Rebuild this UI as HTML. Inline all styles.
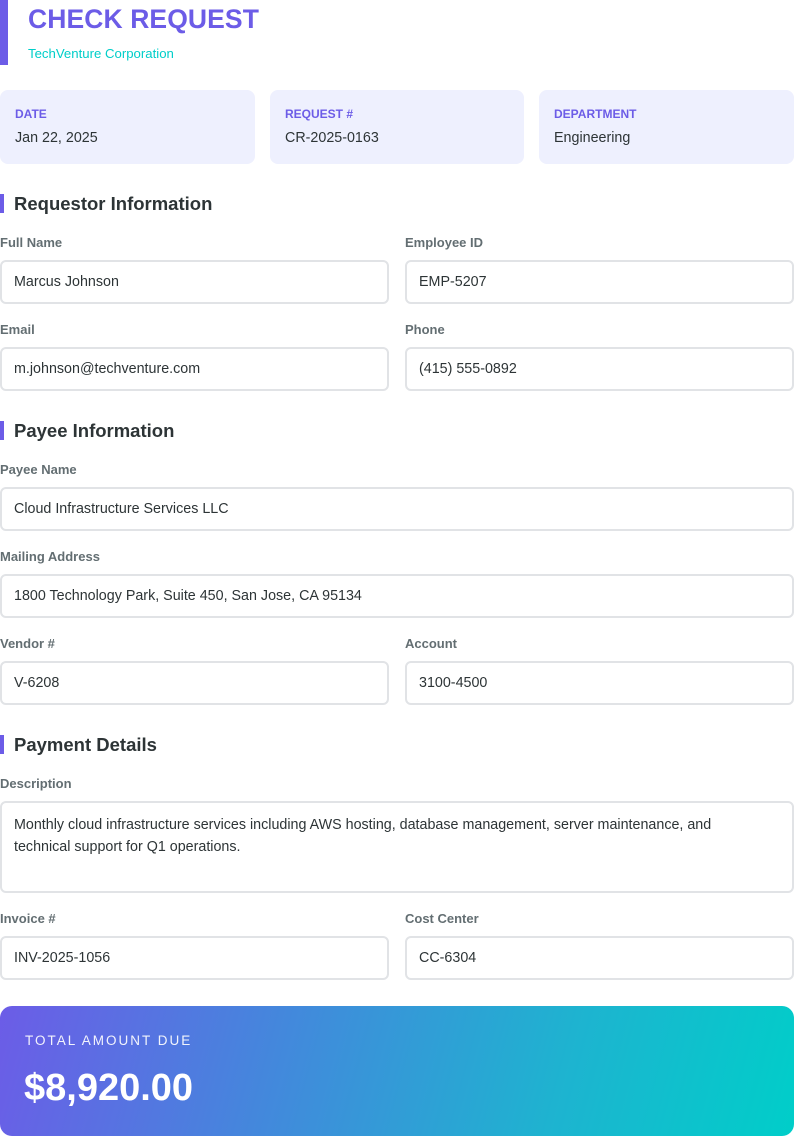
<!DOCTYPE html>
<html><head><style>
*{box-sizing:border-box;margin:0;padding:0}
body{width:794px;height:1123px;overflow:hidden;background:#fff;font-family:"Liberation Sans",Arial,sans-serif;color:#2d3436;position:relative}
.a{position:absolute}
.bar{left:0;top:0;width:8px;height:65px;background:#6c5ce7}
h1{position:absolute;left:28px;top:4px;font-size:26.5px;font-weight:bold;color:#6c5ce7;line-height:30px;letter-spacing:0.1px}
.sub{left:28px;top:46px;font-size:13.2px;color:#00cec9}
.card{top:90px;height:74px;background:#eef0fe;border-radius:8px;padding:0 15px}
.card .l{position:absolute;left:15px;top:17px;font-size:12px;font-weight:bold;color:#6c5ce7}
.card .v{position:absolute;left:15px;top:40px;font-size:14.3px}
.sec{left:0;height:19px;border-left:4px solid #6c5ce7;padding-left:10px;font-size:18.5px;font-weight:bold;line-height:19px}
.lab{font-size:13px;font-weight:bold;color:#636e72;line-height:15px}
.in{height:44px;border:2px solid #e1e3e6;border-radius:6px;padding:0 12px;font-size:14.3px;line-height:40px}
.c1{left:0;width:389px}.c2{left:405px;width:389px}.full{left:0;width:794px}
.tot{left:0;top:1006px;width:794px;height:130px;border-radius:12px;background:linear-gradient(105deg,#6c5ce7 0%,#4388dc 35%,#1eb3d0 70%,#00cec9 100%);color:#fff}
</style></head><body>
<div class="a bar"></div>
<h1>CHECK REQUEST</h1>
<div class="a sub">TechVenture Corporation</div>
<div class="a card" style="left:0;width:255px"><div class="l">DATE</div><div class="v">Jan 22, 2025</div></div>
<div class="a card" style="left:270px;width:254px"><div class="l">REQUEST #</div><div class="v">CR-2025-0163</div></div>
<div class="a card" style="left:539px;width:255px"><div class="l">DEPARTMENT</div><div class="v">Engineering</div></div>

<div class="a sec" style="top:194px">Requestor Information</div>
<div class="a lab c1" style="top:235px">Full Name</div><div class="a lab c2" style="top:235px">Employee ID</div>
<div class="a in c1" style="top:260px">Marcus Johnson</div><div class="a in c2" style="top:260px">EMP-5207</div>
<div class="a lab c1" style="top:322px">Email</div><div class="a lab c2" style="top:322px">Phone</div>
<div class="a in c1" style="top:347px">m.johnson@techventure.com</div><div class="a in c2" style="top:347px">(415) 555-0892</div>

<div class="a sec" style="top:421px">Payee Information</div>
<div class="a lab full" style="top:462px">Payee Name</div>
<div class="a in full" style="top:487px">Cloud Infrastructure Services LLC</div>
<div class="a lab full" style="top:549px">Mailing Address</div>
<div class="a in full" style="top:574px">1800 Technology Park, Suite 450, San Jose, CA 95134</div>
<div class="a lab c1" style="top:636px">Vendor #</div><div class="a lab c2" style="top:636px">Account</div>
<div class="a in c1" style="top:661px">V-6208</div><div class="a in c2" style="top:661px">3100-4500</div>

<div class="a sec" style="top:735px">Payment Details</div>
<div class="a lab full" style="top:776px">Description</div>
<div class="a in full" style="top:801px;height:92px;line-height:22px;padding-top:11px">Monthly cloud infrastructure services including AWS hosting, database management, server maintenance, and<br>technical support for Q1 operations.</div>
<div class="a lab c1" style="top:911px">Invoice #</div><div class="a lab c2" style="top:911px">Cost Center</div>
<div class="a in c1" style="top:936px">INV-2025-1056</div><div class="a in c2" style="top:936px">CC-6304</div>

<div class="a tot">
<div class="a" style="left:25px;top:27px;font-size:13.5px;letter-spacing:2px;opacity:.92">TOTAL AMOUNT DUE</div>
<div class="a" style="left:24px;top:61px;font-size:38px;font-weight:bold;letter-spacing:0">$8,920.00</div>
</div>
</body></html>
